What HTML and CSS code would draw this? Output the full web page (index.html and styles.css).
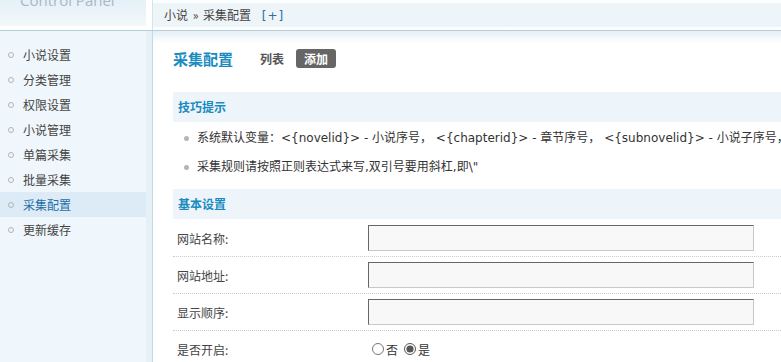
FILE: index.html
```html
<!DOCTYPE html>
<html lang="zh-CN">
<head>
  <meta charset="UTF-8" />
  <title>采集配置 - Control Panel</title>
  <link rel="stylesheet" href="styles.css">
</head>
<body>

<div class="header">
  <div class="logo">
    <div class="logo-box">Control Panel</div>
  </div>
  <div class="topbar">
    <div class="crumb">小说 &raquo; 采集配置 <a href="#" class="plus">[+]</a></div>
  </div>
</div>

<div class="page">
  <div class="sidebar">
    <ul class="menu">
      <li><a href="#">小说设置</a></li>
      <li><a href="#">分类管理</a></li>
      <li><a href="#">权限设置</a></li>
      <li><a href="#">小说管理</a></li>
      <li><a href="#">单篇采集</a></li>
      <li><a href="#">批量采集</a></li>
      <li class="active"><a href="#">采集配置</a></li>
      <li><a href="#">更新缓存</a></li>
    </ul>
  </div>

  <div class="main">
    <div class="title-row">
      <h2>采集配置</h2>
      <a href="#" class="tab">列表</a>
      <a href="#" class="tab current">添加</a>
    </div>

    <div class="section-head">技巧提示</div>
    <ul class="tips">
      <li>系统默认变量：&lt;{novelid}&gt; - 小说序号， &lt;{chapterid}&gt; - 章节序号， &lt;{subnovelid}&gt; - 小说子序号， &lt;{subchapterid}&gt; - 章节子序号</li>
      <li>采集规则请按照正则表达式来写,双引号要用斜杠,即\"</li>
    </ul>

    <div class="section-head">基本设置</div>
    <form class="settings">
      <div class="row">
        <label for="siteName">网站名称:</label>
        <input type="text" id="siteName" name="siteName" />
      </div>
      <div class="row">
        <label for="siteUrl">网站地址:</label>
        <input type="text" id="siteUrl" name="siteUrl" />
      </div>
      <div class="row">
        <label for="siteOrder">显示顺序:</label>
        <input type="text" id="siteOrder" name="siteOrder" />
      </div>
      <div class="row">
        <label>是否开启:</label>
        <div class="radios">
          <input type="radio" name="enabled" value="0" id="en0" /><span>否</span>
          <input type="radio" name="enabled" value="1" id="en1" checked /><span>是</span>
        </div>
      </div>
    </form>
  </div>
</div>

</body>
</html>
```

FILE: styles.css
```css
html, body {
  margin: 0;
  padding: 0;
  overflow: hidden;
}

body {
  font-family: "DejaVu Sans", "Noto Sans CJK SC", sans-serif;
  font-size: 12px;
  color: #333;
  background: #fff;
  width: 781px;
}

a {
  text-decoration: none;
}

ul {
  margin: 0;
  padding: 0;
  list-style: none;
}

/* header */
.header {
  display: flex;
  height: 30px;
  border-bottom: 1px solid #b7ccd7;
}

.logo {
  width: 152px;
  border-right: 1px solid #d4e3ec;
  background: #fff;
}

.logo-box {
  width: 146px;
  height: 33px;
  margin-top: -7px;
  background: linear-gradient(#e2eef6, #f2f8fc);
  color: #a7b9c7;
  font-family: "Open Sans", "DejaVu Sans", sans-serif;
  font-size: 15px;
  line-height: 14px;
  text-indent: 20px;
  overflow: hidden;
}

.topbar {
  flex: 1;
  padding-top: 3px;
  background: #fbfdfe;
}

.crumb {
  height: 24px;
  line-height: 24px;
  background: #eef5f9;
  padding-left: 11px;
  color: #444;
  font-family: "Noto Sans CJK SC", sans-serif;
  word-spacing: 2px;
}

.crumb .plus {
  color: #2d6da3;
  margin-left: 6px;
  font-family: "DejaVu Sans", sans-serif;
  letter-spacing: 1px;
}

/* body */
.page {
  display: flex;
  height: 331px;
}

.sidebar {
  width: 146px;
  background: #f0f7fc;
  border-right: 6px solid #e6f0f7;
  box-shadow: 1px 0 0 #c4d8e5;
  padding-top: 11px;
  font-family: "Noto Sans CJK SC", sans-serif;
}

.menu li {
  height: 25px;
  line-height: 25px;
  padding-left: 23px;
  position: relative;
}

.menu li::before {
  content: "";
  position: absolute;
  left: 8px;
  top: 10px;
  width: 4px;
  height: 4px;
  border: 1px solid #b3b3b3;
  border-radius: 50%;
}

.menu a {
  color: #444;
}

.menu li.active {
  background: #dcebf6;
}

.menu li.active a {
  color: #1f6ea8;
}

.main {
  flex: 1;
  margin-left: 1px;
  padding-left: 20px;
  background: linear-gradient(#e4eff6, #fff 12px);
  min-width: 0;
  overflow: hidden;
}

.title-row {
  display: flex;
  align-items: center;
  height: 54px;
  margin-bottom: 7px;
}

.title-row h2 {
  margin: 0 27px 0 0;
  font-size: 15px;
  color: #1a8bc1;
  font-family: "Noto Sans CJK SC", sans-serif;
}

.tab {
  font-family: "Noto Sans CJK SC", sans-serif;
  font-weight: bold;
  color: #555;
  margin-right: 12px;
}

.tab.current {
  background: #666;
  color: #fff;
  border-radius: 3px;
  padding: 1px 8px;
  line-height: 17px;
}

.section-head {
  background: #eef5fa;
  color: #1a8bc1;
  font-weight: bold;
  font-family: "Noto Sans CJK SC", sans-serif;
  height: 30px;
  line-height: 30px;
  padding-left: 5px;
}

.tips {
  padding: 2px 0 7px 11px;
}

.tips li {
  height: 29px;
  line-height: 29px;
  white-space: nowrap;
  padding-left: 13px;
  position: relative;
}

.tips li::before {
  content: "";
  position: absolute;
  left: 0;
  top: 12px;
  width: 5px;
  height: 5px;
  border-radius: 50%;
  background: #b5b5b5;
}

.settings {
  margin-top: 1px;
}

.row {
  display: flex;
  align-items: center;
  height: 36px;
  border-bottom: 1px dotted #ccc;
}

.row label {
  width: 191px;
  padding-left: 4px;
  color: #444;
  font-family: "Noto Sans CJK SC", sans-serif;
}

.row input[type="text"] {
  width: 386px;
  height: 26px;
  box-sizing: border-box;
  margin: 0;
  background: #f8f8f8;
  border: 1px solid #c9c9c9;
  border-top-color: #666;
  border-left-color: #666;
}

.radios {
  display: flex;
  align-items: center;
  padding-left: 4px;
  font-family: "Noto Sans CJK SC", sans-serif;
}

.radios input {
  margin: 0 2px 0 0;
  width: 12px;
  height: 12px;
  accent-color: #555;
}

.radios span {
  margin-right: 6px;
}
```
